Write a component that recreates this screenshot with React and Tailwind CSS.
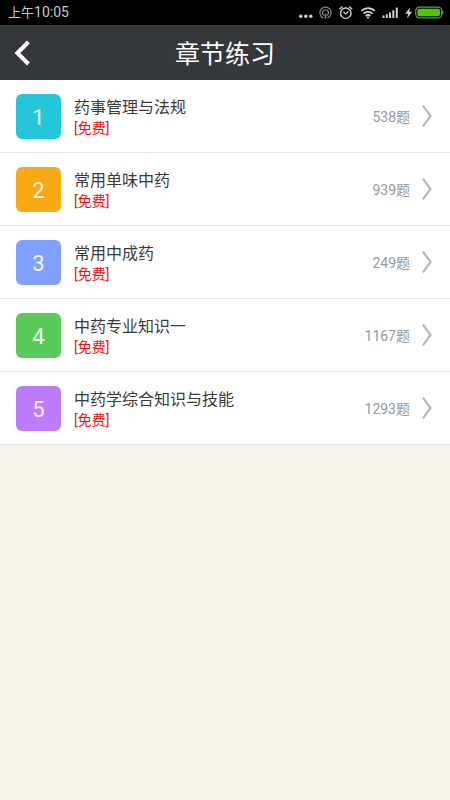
import React from "react";

const chapters = [
  { id: 1, title: "药事管理与法规", count: 538, color: "bg-[#26c6da]" },
  { id: 2, title: "常用单味中药", count: 939, color: "bg-[#faa916]" },
  { id: 3, title: "常用中成药", count: 249, color: "bg-[#80a0ff]" },
  { id: 4, title: "中药专业知识一", count: 1167, color: "bg-[#5acb5a]" },
  { id: 5, title: "中药学综合知识与技能", count: 1293, color: "bg-[#bd7bfb]" },
];

function StatusIcons() {
  return (
    <div className="flex items-center text-[#d0d0d0]">
      {/* More notifications */}
      <svg width="14" height="14" viewBox="0 0 14 14" fill="currentColor" className="mr-1.5">
        <circle cx="1.8" cy="10.2" r="1.7" />
        <circle cx="6.8" cy="10.2" r="1.7" />
        <circle cx="11.8" cy="10.2" r="1.7" />
      </svg>

      {/* Hotspot */}
      <svg
        width="14"
        height="14"
        viewBox="0 0 14 14"
        fill="none"
        stroke="#858585"
        strokeLinecap="round"
        className="mr-1.5"
      >
        <path d="M3.9 11.6A5.6 5.6 0 1 1 9.1 11.6" strokeWidth="1.2" />
        <path d="M4.8 9.2A3 3 0 1 1 8.2 9.2" strokeWidth="1.2" />
        <path d="M6.5 8.4V12" strokeWidth="1.6" />
      </svg>

      {/* Alarm */}
      <svg
        width="14"
        height="14"
        viewBox="0 0 14 14"
        fill="none"
        stroke="currentColor"
        strokeLinecap="round"
        className="mr-2"
      >
        <circle cx="6.8" cy="7.2" r="5.2" strokeWidth="1.4" />
        <path d="M0.9 2.8L3 1M12.7 2.8L10.6 1" strokeWidth="1.5" />
        <path d="M4.8 6.2L6.8 8L9.2 5.8" strokeWidth="1.2" />
      </svg>

      {/* Wifi */}
      <svg
        width="15"
        height="14"
        viewBox="0 0 15 14"
        fill="none"
        stroke="currentColor"
        strokeWidth="1.8"
        className="mr-1.5"
      >
        <path d="M0.2 5C3.8 1.2 10.2 1.2 13.8 5" />
        <path d="M2.5 7.6C4.9 5.2 9.1 5.2 11.5 7.6" />
        <path d="M4.7 10C6 8.8 8 8.8 9.3 10" />
        <circle cx="7" cy="11.6" r="1.1" fill="currentColor" stroke="none" />
      </svg>

      {/* Signal */}
      <svg width="17" height="14" viewBox="0 0 17 14" fill="currentColor" className="mr-1.5">
        <rect x="0.5" y="9.5" width="2" height="2.5" />
        <rect x="3.8" y="8.2" width="2" height="3.8" />
        <rect x="7" y="6.4" width="2" height="5.6" />
        <rect x="10.3" y="4.2" width="2" height="7.8" />
        <rect x="13.8" y="1.6" width="2" height="10.4" />
      </svg>

      {/* Charging */}
      <svg width="8" height="14" viewBox="0 0 8 14" fill="currentColor" className="mr-0.5">
        <path d="M5.2 1.2L0.2 7.8H3.2L2 12.6L7.2 5.8H4.2Z" />
      </svg>
      <svg width="29" height="14" viewBox="0 0 29 14" fill="none">
        <rect x="0.7" y="1.2" width="26" height="10.6" rx="3.6" stroke="#55a520" strokeWidth="1.2" />
        <rect x="2.3" y="2.7" width="22.8" height="7.6" rx="2.4" fill="#4fc50c" />
        <path d="M27.7 4.5V8.5" stroke="#55a520" strokeWidth="1.2" />
      </svg>
    </div>
  );
}

function ChapterRow({ chapter }) {
  return (
    <li className="border-b border-[#e6e6e6]">
      <button type="button" className="flex w-full items-center h-18 px-4 text-left">
        <span
          className={`flex size-[45px] shrink-0 items-center justify-center rounded-md pt-0.5 text-[22px] text-white/90 ${chapter.color}`}
        >
          {chapter.id}
        </span>
        <span className="ml-3 flex min-w-0 flex-1 flex-col pl-px">
          <span className="truncate text-base leading-6 text-[#3a3a3a]">{chapter.title}</span>
          <span className="text-sm leading-4 text-[#ee1111]">[免费]</span>
        </span>
        <span className="pt-0.5 text-sm text-[#999999]">{chapter.count}题</span>
        <svg
          width="12"
          height="24"
          viewBox="0 0 12 24"
          fill="none"
          stroke="#b8b8b8"
          strokeWidth="2.2"
          className="ml-3"
        >
          <path d="M0.9 1.6L8.6 12L0.9 22.4" />
        </svg>
      </button>
    </li>
  );
}

function App() {
  return (
    <div className="min-h-screen bg-[#f8f5ee] font-[Roboto,'Noto_Sans_CJK_SC',sans-serif]">
      <div className="flex h-[25px] items-center justify-between bg-black pl-2 pr-1.5">
        <span className="text-[13px] text-[#c8c8c8]">
          上午<span className="text-sm">10:05</span>
        </span>
        <StatusIcons />
      </div>

      <header className="grid h-[55px] grid-cols-[48px_1fr_48px] items-center bg-[#34383a]">
        <button type="button" aria-label="返回" className="flex h-full items-center pl-3.5">
          <svg
            width="18"
            height="26"
            viewBox="0 0 18 26"
            fill="none"
            stroke="#ffffff"
            strokeWidth="4"
          >
            <path d="M14.4 2L3.4 13L14.4 24" />
          </svg>
        </button>
        <h1 className="pt-1 text-center text-[25px] text-white">章节练习</h1>
      </header>

      <ul className="bg-white">
        {chapters.map((chapter) => (
          <ChapterRow key={chapter.id} chapter={chapter} />
        ))}
      </ul>
    </div>
  );
}

export default App;
